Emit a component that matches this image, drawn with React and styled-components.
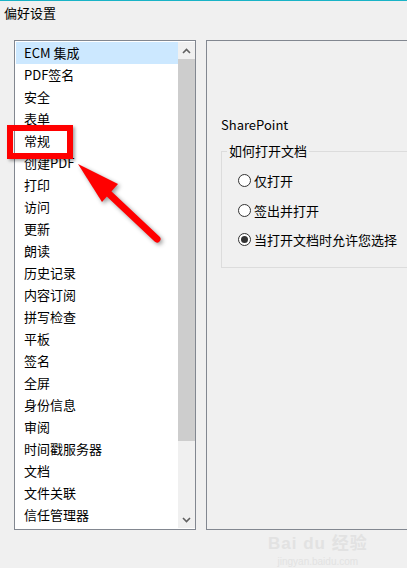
import React from "react";
import styled, { createGlobalStyle } from "styled-components";

const GlobalStyle = createGlobalStyle`
  html, body {
    margin: 0;
    padding: 0;
    background: #f0f0f0;
    font-family: "Noto Sans CJK SC", "Liberation Sans", sans-serif;
    overflow: hidden;
  }
`;

const Page = styled.div`
  position: relative;
  width: 407px;
  height: 568px;
  border-top: 1px solid #19b3c6;
  box-sizing: border-box;
  overflow: hidden;
`;

const Title = styled.div`
  height: 27px;
  padding-left: 4px;
  font-size: 13px;
  line-height: 24px;
  color: #000;
`;

const Body = styled.div`
  display: flex;
  gap: 10px;
  padding: 12px 0 0 14px;
`;

const ListBox = styled.div`
  display: flex;
  width: 182px;
  height: 490px;
  box-sizing: border-box;
  border: 1px solid #828790;
  background: #fff;
  padding: 1px 0 1px 1px;
`;

const Items = styled.ul`
  flex: 1;
  margin: 0;
  padding: 0;
  list-style: none;
`;

const Item = styled.li`
  height: 22px;
  line-height: 22px;
  padding-left: 8px;
  font-size: 13px;
  color: #000;
  background: ${(p) => (p.$selected ? "#cce8ff" : "transparent")};
  white-space: nowrap;
`;

const Scrollbar = styled.div`
  width: 17px;
  display: flex;
  flex-direction: column;
  background: #f0f0f0;
`;

const ScrollButton = styled.div`
  height: 17px;
  display: flex;
  align-items: center;
  justify-content: center;
  color: #606060;
`;

const Track = styled.div`
  flex: 1;
  display: flex;
  flex-direction: column;
`;

const Thumb = styled.div`
  height: 382px;
  background: #cdcdcd;
`;

const Panel = styled.div`
  flex: 1;
  height: 490px;
  box-sizing: border-box;
  border: 1px solid #828790;
  border-right: none;
  padding: 74px 0 0 14px;
`;

const Section = styled.div`
  font-size: 13px;
  color: #000;
  line-height: 20px;
  margin-bottom: 8px;
`;

const Group = styled.fieldset`
  margin: 0;
  border: 1px solid #dcdcdc;
  border-right: none;
  padding: 7px 0 0 16px;
  height: 125px;
  box-sizing: border-box;
`;

const Legend = styled.legend`
  font-size: 13px;
  padding: 0 2px;
  margin-left: -11px;
  line-height: 16px;
  color: #000;
`;

const Option = styled.label`
  display: flex;
  align-items: center;
  gap: 3px;
  height: 29.5px;
  font-size: 13px;
  color: #000;
  white-space: nowrap;
`;

const Radio = styled.span`
  width: 11px;
  height: 11px;
  border: 1px solid #333;
  border-radius: 50%;
  background: #fff;
  display: flex;
  align-items: center;
  justify-content: center;

  &::after {
    content: "";
    width: 7px;
    height: 7px;
    border-radius: 50%;
    background: ${(p) => (p.$checked ? "#333" : "transparent")};
  }
`;

const Highlight = styled.div`
  position: absolute;
  left: 7px;
  top: 124px;
  width: 66px;
  height: 34px;
  box-sizing: border-box;
  border: 6px solid #ff0000;
  box-shadow: 2px 2px 3px rgba(0, 0, 0, 0.35);
`;

const Arrow = styled.svg`
  position: absolute;
  left: 70px;
  top: 155px;
  filter: drop-shadow(2px 2px 2px rgba(0, 0, 0, 0.4));
`;

const Watermark = styled.div`
  position: absolute;
  left: 268px;
  top: 528px;
  color: #e2e2e2;
  text-align: center;
  font-family: "Liberation Sans", "Noto Sans CJK SC", sans-serif;

  .brand {
    font-size: 17px;
    font-weight: bold;
    letter-spacing: 1px;
  }

  .url {
    font-size: 10px;
    margin-top: 2px;
  }
`;

const items = [
  "ECM 集成",
  "PDF签名",
  "安全",
  "表单",
  "常规",
  "创建PDF",
  "打印",
  "访问",
  "更新",
  "朗读",
  "历史记录",
  "内容订阅",
  "拼写检查",
  "平板",
  "签名",
  "全屏",
  "身份信息",
  "审阅",
  "时间戳服务器",
  "文档",
  "文件关联",
  "信任管理器",
];

const options = ["仅打开", "签出并打开", "当打开文档时允许您选择"];

function Chevron({ up }) {
  return (
    <svg width="9" height="6" viewBox="0 0 9 6">
      <path
        d={up ? "M1 5 L4.5 1.5 L8 5" : "M1 1 L4.5 4.5 L8 1"}
        fill="none"
        stroke="#606060"
        strokeWidth="1.6"
      />
    </svg>
  );
}

export default function App() {
  return (
    <Page>
      <GlobalStyle />
      <Title>偏好设置</Title>
      <Body>
        <ListBox>
          <Items>
            {items.map((name, i) => (
              <Item key={name} $selected={i === 0}>
                {name}
              </Item>
            ))}
          </Items>
          <Scrollbar>
            <ScrollButton>
              <Chevron up />
            </ScrollButton>
            <Track>
              <Thumb />
            </Track>
            <ScrollButton>
              <Chevron />
            </ScrollButton>
          </Scrollbar>
        </ListBox>
        <Panel>
          <Section>SharePoint</Section>
          <Group>
            <Legend>如何打开文档</Legend>
            {options.map((o, i) => (
              <Option key={o}>
                <Radio $checked={i === 2} />
                {o}
              </Option>
            ))}
          </Group>
        </Panel>
      </Body>

      <Highlight />
      <Arrow width="100" height="100" viewBox="0 0 100 100">
        <polygon points="8,8 32,46 48,28" fill="#ff0000" />
        <line
          x1="36"
          y1="35"
          x2="87"
          y2="83"
          stroke="#ff0000"
          strokeWidth="7"
          strokeLinecap="round"
        />
      </Arrow>

      <Watermark>
        <div className="brand">Bai du 经验</div>
        <div className="url">jingyan.baidu.com</div>
      </Watermark>
    </Page>
  );
}
